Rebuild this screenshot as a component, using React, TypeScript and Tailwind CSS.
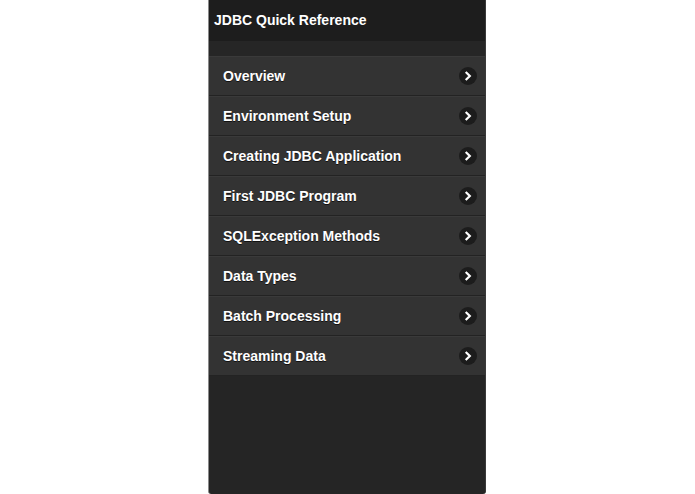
import React from "react";

const items = [
  "Overview",
  "Environment Setup",
  "Creating JDBC Application",
  "First JDBC Program",
  "SQLException Methods",
  "Data Types",
  "Batch Processing",
  "Streaming Data",
];

function Chevron() {
  return (
    <span className="flex h-[18px] w-[18px] items-center justify-center rounded-full bg-[#1c1c1c]">
      <svg width="10" height="10" viewBox="0 0 10 10">
        <path d="M3.5 1.8 L6.8 5 L3.5 8.2" fill="none" stroke="#ffffff" strokeWidth="2.2" strokeLinecap="square" />
      </svg>
    </span>
  );
}

export default function App() {
  return (
    <div className="flex h-[494px] w-[695px] justify-center bg-white" style={{ fontFamily: "Helvetica, 'Liberation Sans', Arial, sans-serif" }}>
      <div className="mr-[1px] flex h-full w-[278px] flex-col overflow-hidden rounded-b-[3px] border-l border-r border-l-[#8a8a8a] border-r-[#3a3a3a] bg-[#252525]">
        <div className="flex h-[41px] items-center bg-[#1d1d1d] pl-[5px] text-[14px] font-bold text-white">
          JDBC Quick Reference
        </div>
        <div className="h-[15px] bg-[#262626]" />
        <div className="flex flex-col">
          {items.map((t) => (
            <div
              key={t}
              className="flex h-[40px] items-center justify-between border-b border-t border-b-[#232323] border-t-[#3a3a3a] bg-[#333333] pl-[14px] pr-[8px] text-[14px] font-bold text-white [text-shadow:0_1px_0_#111]"
            >
              <span>{t}</span>
              <Chevron />
            </div>
          ))}
        </div>
      </div>
    </div>
  );
}
